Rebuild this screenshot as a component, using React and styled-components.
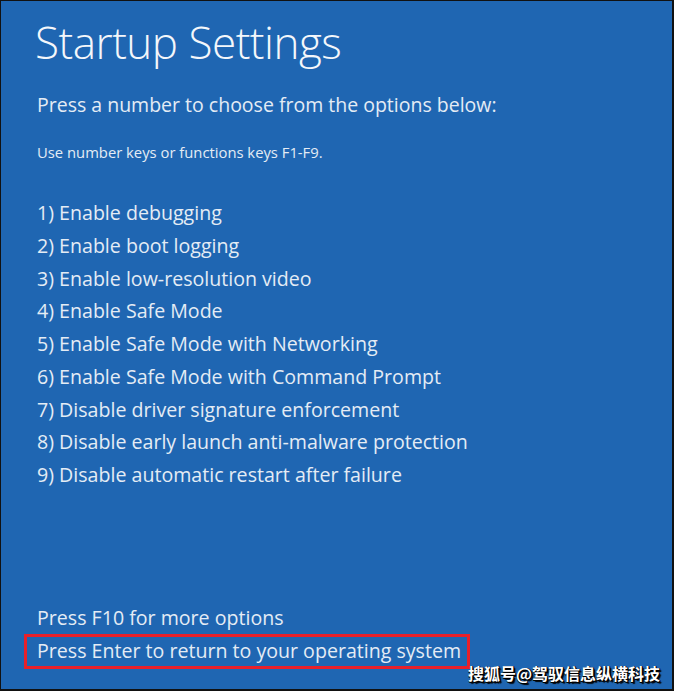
import styled, { createGlobalStyle } from 'styled-components'

const GlobalStyle = createGlobalStyle`
  html, body {
    margin: 0;
    padding: 0;
    background: #000;
  }
  * {
    box-sizing: border-box;
  }
`

const options = [
  'Enable debugging',
  'Enable boot logging',
  'Enable low-resolution video',
  'Enable Safe Mode',
  'Enable Safe Mode with Networking',
  'Enable Safe Mode with Command Prompt',
  'Disable driver signature enforcement',
  'Disable early launch anti-malware protection',
  'Disable automatic restart after failure',
]

const App = () => {
  return (
    <>
      <GlobalStyle />
      <Screen>
        <Title>Startup Settings</Title>
        <Lead>Press a number to choose from the options below:</Lead>
        <Hint>Use number keys or functions keys F1-F9.</Hint>
        <OptionList>
          {options.map((text, i) => (
            <li key={text}>
              {i + 1}) {text}
            </li>
          ))}
        </OptionList>
        <Footer>
          <Line>Press F10 for more options</Line>
          <Highlight>Press Enter to return to your operating system</Highlight>
        </Footer>
        <Watermark>搜狐号@驾驭信息纵横科技</Watermark>
      </Screen>
    </>
  )
}

export default App

const Screen = styled.div`
  position: relative;
  display: flex;
  flex-direction: column;
  width: 674px;
  height: 691px;
  padding: 13px 0 20px 36px;
  background-color: #1f66b2;
  border: 1px solid #111;
  border-right-width: 2px;
  border-bottom-width: 2px;
  color: #e4ecf5;
  font-family: 'Open Sans', 'Noto Sans', sans-serif;
`

const Title = styled.h1`
  margin: 0;
  margin-left: -2px;
  font-size: 44px;
  letter-spacing: -0.5px;
  line-height: 56px;
  font-weight: 300;
  color: #f4f7fb;
`

const Lead = styled.p`
  margin: 19px 0 0;
  font-size: 19.5px;
  line-height: 32.7px;
  font-weight: 400;
`

const Hint = styled.p`
  margin: 20px 0 0;
  font-size: 14.8px;
  line-height: 20px;
`

const OptionList = styled.ul`
  list-style: none;
  margin: 35.6px 0 0;
  padding: 0;
  li {
    font-size: 19.6px;
    line-height: 32.7px;
  }
`

const Footer = styled.div`
  margin-top: auto;
  display: flex;
  flex-direction: column;
`

const Line = styled.div`
  font-size: 19.6px;
  line-height: 32.7px;
  margin-bottom: -0.5px;
`

const Highlight = styled.div`
  align-self: flex-start;
  width: 446px;
  height: 35px;
  margin-left: -13px;
  padding: 1px 10px 0;
  border: 3px solid #e8202a;
  font-size: 19.6px;
  line-height: 25px;
  white-space: nowrap;
`

const Watermark = styled.div`
  position: absolute;
  right: 12px;
  bottom: 6px;
  font-family: 'Noto Sans CJK SC', sans-serif;
  font-weight: 700;
  font-size: 16px;
  line-height: 20px;
  color: #fff;
  text-shadow: 1px 1px 0 #000, 1px 0 0 #000, 0 1px 0 #000, 2px 2px 1px #000;
`
